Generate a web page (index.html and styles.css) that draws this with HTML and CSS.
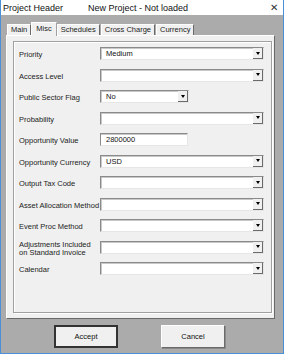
FILE: index.html
```html
<!DOCTYPE html>
<html lang="en">
<head>
  <meta charset="UTF-8" />
  <title>Project Header</title>
  <link rel="stylesheet" href="styles.css">
</head>
<body>
  <div class="window">
    <div class="titlebar">
      <span class="title">Project Header</span>
      <span class="subtitle">New Project - Not loaded</span>
      <span class="close">&#x2715;</span>
    </div>

    <div class="client">
      <div class="tabs">
        <div class="tab">Main</div>
        <div class="tab active">Misc</div>
        <div class="tab">Schedules</div>
        <div class="tab">Cross Charge</div>
        <div class="tab">Currency</div>
      </div>

      <div class="page">
        <div class="frame">
          <div class="row">
            <label>Priority</label>
            <div class="combo"><span class="value">Medium</span><span class="drop"></span></div>
          </div>
          <div class="row">
            <label>Access Level</label>
            <div class="combo"><span class="value"></span><span class="drop"></span></div>
          </div>
          <div class="row">
            <label>Public Sector Flag</label>
            <div class="combo short"><span class="value">No</span><span class="drop"></span></div>
          </div>
          <div class="row">
            <label>Probability</label>
            <div class="combo"><span class="value"></span><span class="drop"></span></div>
          </div>
          <div class="row">
            <label>Opportunity Value</label>
            <div class="textbox"><span class="value">2800000</span></div>
          </div>
          <div class="row">
            <label>Opportunity Currency</label>
            <div class="combo"><span class="value">USD</span><span class="drop"></span></div>
          </div>
          <div class="row">
            <label>Output Tax Code</label>
            <div class="combo"><span class="value"></span><span class="drop"></span></div>
          </div>
          <div class="row">
            <label>Asset Allocation Method</label>
            <div class="combo"><span class="value"></span><span class="drop"></span></div>
          </div>
          <div class="row">
            <label>Event Proc Method</label>
            <div class="combo"><span class="value"></span><span class="drop"></span></div>
          </div>
          <div class="row two-line">
            <label>Adjustments Included<br>on Standard Invoice</label>
            <div class="combo"><span class="value"></span><span class="drop"></span></div>
          </div>
          <div class="row">
            <label>Calendar</label>
            <div class="combo"><span class="value"></span><span class="drop"></span></div>
          </div>
        </div>
      </div>

      <div class="buttons">
        <button class="btn default">Accept</button>
        <button class="btn">Cancel</button>
      </div>
    </div>
  </div>
</body>
</html>
```

FILE: styles.css
```css
body {
  margin: 0;
  font-family: "Liberation Sans", Arial, sans-serif;
  color: #222;
  background: #ababab;
}

.window {
  box-sizing: border-box;
  width: 284px;
  height: 354px;
  border: 1px solid #4a8fd8;
  border-top: none;
  background: #ababab;
  display: flex;
  flex-direction: column;
}

.titlebar {
  height: 15px;
  background: white;
  display: flex;
  align-items: center;
  font-size: 9px;
  color: #111;
  padding-left: 2px;
}

.title {
  width: 85px;
}

.close {
  margin-left: auto;
  margin-right: 5px;
  font-size: 10px;
  color: #333;
}

.client {
  flex: 1;
  padding: 6px 8px 0 5px;
  display: flex;
  flex-direction: column;
}

/* Tabs */
.tabs {
  display: flex;
  align-items: flex-end;
  height: 14px;
  padding-left: 1px;
}

.tab {
  height: 10px;
  line-height: 10px;
  font-size: 7.5px;
  padding: 0 3px;
  background: #f0f0f0;
  border-top: 1px solid #fff;
  border-left: 1px solid #fff;
  border-right: 1px solid #696969;
  margin-right: 1px;
}

.tab.active {
  height: 13px;
  line-height: 12px;
  padding: 0 4px;
  position: relative;
  z-index: 1;
  margin: 0 0 -1px -1px;
  border-right-color: #a0a0a0;
}

/* Page */
.page {
  height: 284px;
  background: #f0f0f0;
  border-top: 1px solid #fff;
  border-left: 1px solid #fff;
  border-right: 1px solid #696969;
  border-bottom: 1px solid #696969;
  padding: 5px 2px 5px 6px;
  box-sizing: border-box;
}

.frame {
  height: 100%;
  box-sizing: border-box;
  border: 1px solid #a0a0a0;
  box-shadow: inset 1px 1px #fff, 1px 1px #fff;
  padding: 5px 7px 0 5px;
}

.row {
  height: 21.5px;
  display: flex;
  align-items: flex-start;
}

.row label {
  width: 81px;
  font-size: 7.5px;
  line-height: 8.5px;
  padding-top: 4px;
  color: #222;
}

.row.two-line label {
  padding-top: 0;
}

.combo,
.textbox {
  flex: 1;
  height: 13px;
  box-sizing: border-box;
  background: white;
  border-top: 1px solid #8a8a8a;
  border-left: 1px solid #8a8a8a;
  border-right: 1px solid #e6e6e6;
  border-bottom: 1px solid #e6e6e6;
  box-shadow: inset 1px 1px #c8c8c8;
  display: flex;
  align-items: center;
}

.combo.short {
  flex: none;
  width: 89px;
}

.textbox {
  flex: none;
  width: 88px;
  box-shadow: inset 0 1px #c8c8c8;
}

.value {
  flex: 1;
  font-size: 7.5px;
  padding-left: 5px;
  color: #111;
}

.drop {
  width: 9px;
  height: 10px;
  background: #f0f0f0;
  border-right: 1px solid #6a6a6a;
  border-bottom: 1px solid #6a6a6a;
  display: flex;
  align-items: center;
  justify-content: center;
}

.drop::after {
  content: "";
  border-left: 2.5px solid transparent;
  border-right: 2.5px solid transparent;
  border-top: 3px solid #000;
}

/* Buttons */
.buttons {
  display: flex;
  padding: 6px 0 0 48px;
  gap: 43px;
}

.btn {
  width: 64px;
  height: 23px;
  font-family: "Liberation Sans", Arial, sans-serif;
  font-size: 7.5px;
  color: #111;
  background: #f0f0f0;
  border: 1px solid #fff;
  border-right-color: #6a6a6a;
  border-bottom-color: #6a6a6a;
  box-shadow: 1px 1px #8a8a8a;
  padding: 0;
}

.btn.default {
  border: 2px solid #333;
  box-shadow: none;
}
```
